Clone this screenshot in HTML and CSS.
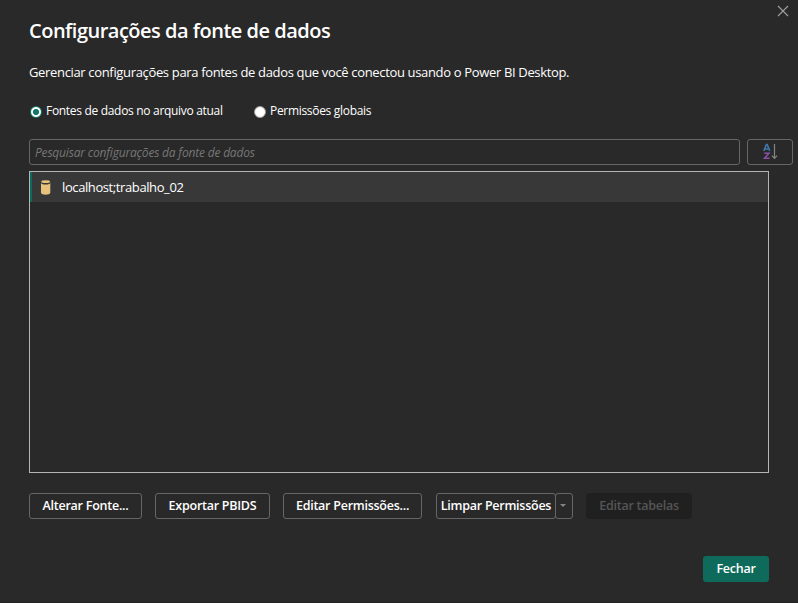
FILE: index.html
```html
<!DOCTYPE html>
<html lang="pt-BR">
<head>
<meta charset="utf-8">
<title>Configurações da fonte de dados</title>
<link rel="stylesheet" href="styles.css">
</head>
<body>
<main class="dialog">
  <button class="close" aria-label="Fechar janela">
    <svg width="12" height="12" viewBox="0 0 12 12"><path d="M1 1L11 11M11 1L1 11" stroke="#a0a0a0" stroke-width="1.1" fill="none"/></svg>
  </button>
  <h1 class="title"><span>Configurações da fonte de dados</span></h1>
  <p class="description"><span>Gerenciar configurações para fontes de dados que você conectou usando o Power BI Desktop.</span></p>
  <div class="scope">
    <label class="option"><i class="radio radio-on"></i><span>Fontes de dados no arquivo atual</span></label>
    <label class="option"><i class="radio"></i><span>Permissões globais</span></label>
  </div>
  <div class="search-row">
    <div class="search"><span>Pesquisar configurações da fonte de dados</span></div>
    <button class="sort" aria-label="Classificar">
      <svg width="16" height="18" viewBox="0 0 16 18" fill="none">
        <path d="M1.8 8L4.4 1.5H5.2L7.8 8M3 6H6.8" stroke="#3f78ad" stroke-width="1.6"/>
        <path d="M2.2 10.2H7L2.5 15.3H7.6" stroke="#8a50a8" stroke-width="1.5"/>
        <path d="M12.5 1V15M9.9 12.7L12.5 15.3L15.1 12.7" stroke="#858585" stroke-width="1.2"/>
      </svg>
    </button>
  </div>
  <div class="list">
    <div class="item">
      <svg class="database" width="10" height="15" viewBox="0 0 10 15"><path d="M0 2.5V12.7C0 15.3 9.3 15.3 9.3 12.7V2.5Z" fill="#e8c17c"/><ellipse cx="4.65" cy="2.4" rx="4.65" ry="2" fill="#383838"/><ellipse cx="4.65" cy="1.7" rx="4.4" ry="1.4" fill="#e8c17c"/></svg>
      <span class="item-name">localhost;trabalho_02</span>
    </div>
  </div>
  <div class="actions">
    <button class="button change"><span>Alterar Fonte...</span></button>
    <button class="button export"><span>Exportar PBIDS</span></button>
    <button class="button edit"><span>Editar Permissões...</span></button>
    <div class="split">
      <button class="button clear"><span>Limpar Permissões</span></button>
      <button class="button more" aria-label="Mais opções"><svg width="6" height="3" viewBox="0 0 6 3"><path d="M0 0H6L3 3Z" fill="#858585"/></svg></button>
    </div>
    <button class="button tables" disabled><span>Editar tabelas</span></button>
  </div>
  <div class="footer"><button class="button primary"><span>Fechar</span></button></div>
</main>
</body>
</html>
```

FILE: styles.css
```css
* { box-sizing: border-box; }
body { margin: 0; background: #292929; }
button { font: inherit; color: inherit; background: none; border: 0; padding: 0; margin: 0; display: flex; align-items: center; justify-content: center; }
.dialog { position: relative; width: 798px; height: 603px; padding: 19px 5px 0 29px; overflow: hidden; background: #292929; color: #fff; font: 13px/18px "Open Sans", "Noto Sans", sans-serif; letter-spacing: -0.4px; white-space: nowrap; border-bottom: 1px solid #202020; }
.close { position: absolute; left: 777px; top: 5px; }
.title { margin: 0; height: 24px; font-size: 20px; line-height: 24px; font-weight: 600; letter-spacing: -0.5px; }
.description { margin: 20px 0 0; height: 18px; letter-spacing: -0.34px; }
.scope { display: flex; margin-top: 21px; height: 18px; gap: 30px; font-size: 12px; letter-spacing: -0.31px; }
.option { display: flex; align-items: center; gap: 4px; }
.option:first-child { width: 194px; }
.radio { width: 12px; height: 12px; margin: 2px 0 0 1px; border: 1px solid #999; border-radius: 50%; background: #fff; flex: none; }
.radio-on { border-color: #107967; background: radial-gradient(circle, #107967 0 2.8px, #fff 3.2px); }
.search-row { display: flex; gap: 7px; margin-top: 19px; }
.search { width: 711px; height: 26px; border: 1px solid #666; border-radius: 3px; padding: 4px 5px; line-height: 18px; font-size: 12px; letter-spacing: -0.19px; font-style: italic; color: #777; }
.sort { width: 46px; height: 26px; border: 1px solid #666; border-radius: 3px; }
.list { width: 740px; height: 302px; margin-top: 6px; border: 1px solid #b5b5b5; }
.item { display: flex; align-items: center; height: 30px; background: #383838; border-left: 2px solid #0e6b5b; padding-left: 9px; }
.item-name { margin-left: 11px; }
.actions { display: flex; margin-top: 20px; gap: 13px; }
.button { height: 26px; border: 1px solid #666; border-radius: 3px; font-size: 12.5px; letter-spacing: -0.25px; font-weight: 600; padding-bottom: 1px; }
.change { width: 113px; }
.export { width: 115px; }
.edit { width: 139px; }
.split { display: flex; margin-left: 1px; }
.clear { width: 120px; }
.more { width: 18px; margin-left: -1px; padding-right: 2px; }
.tables { width: 106px; border: 0; background: #202020; color: #555; }
.footer { display: flex; justify-content: flex-end; margin: 37px 24px 0 0; }
.primary { width: 66px; border: 0; background: #0e6b5b; }
```
